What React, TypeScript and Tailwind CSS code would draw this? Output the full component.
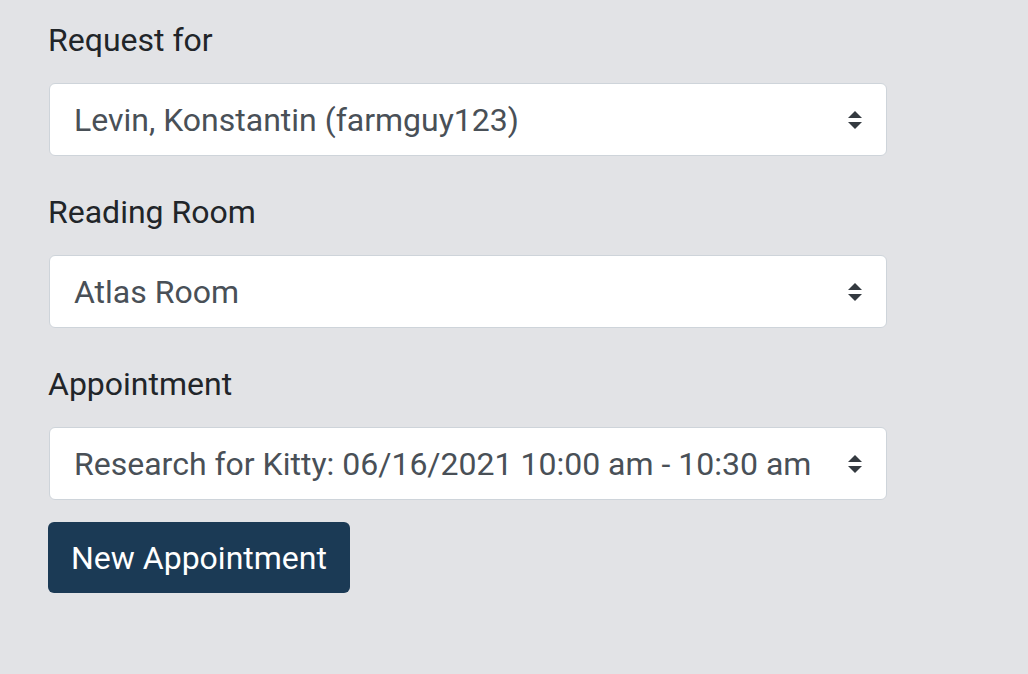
import { useState } from 'react';

function SortIcon({ className }: { className?: string }) {
  return (
    <svg className={className} viewBox="0 0 16 21" fill="currentColor">
      <path d="M8 1.5L15 8.5H1z" />
      <path d="M8 19.5L1 12.5h14z" />
    </svg>
  );
}

interface SelectFieldProps {
  label: string;
  value: string;
  options: string[];
  onChange: (v: string) => void;
  className?: string;
}

function SelectField({ label, value, options, onChange, className }: SelectFieldProps) {
  return (
    <div className={className}>
      <label className="block text-[32px] leading-[42px] text-[#212529] mb-[22px]">{label}</label>
      <div className="relative w-[838px] ml-px">
        <select
          value={value}
          onChange={(e) => onChange(e.target.value)}
          className="appearance-none w-full h-[73px] bg-white border-[1.5px] border-[#ced4da] rounded-[6px] pl-[24px] pr-[60px] text-[32px] text-[#495057] outline-none"
        >
          {options.map((o) => (
            <option key={o}>{o}</option>
          ))}
        </select>
        <SortIcon className="pointer-events-none absolute right-[24px] top-1/2 -translate-y-1/2 w-[16px] h-[21px] text-[#343a40]" />
      </div>
    </div>
  );
}

export default function App() {
  const [patron, setPatron] = useState('Levin, Konstantin (farmguy123)');
  const [room, setRoom] = useState('Atlas Room');
  const [appt, setAppt] = useState('Research for Kitty: 06/16/2021 10:00 am - 10:30 am');

  return (
    <div
      className="min-h-[674px] bg-[#e2e3e6] pl-[48px] pt-[19px]"
      style={{ fontFamily: 'Roboto, "Noto Sans", sans-serif' }}
    >
      <SelectField
        label="Request for"
        value={patron}
        options={['Levin, Konstantin (farmguy123)']}
        onChange={setPatron}
        className="mb-[35px]"
      />
      <SelectField
        label="Reading Room"
        value={room}
        options={['Atlas Room']}
        onChange={setRoom}
        className="mb-[35px]"
      />
      <SelectField
        label="Appointment"
        value={appt}
        options={['Research for Kitty: 06/16/2021 10:00 am - 10:30 am']}
        onChange={setAppt}
        className="mb-[22px]"
      />
      <button className="h-[71px] px-[23px] rounded-[6px] bg-[#1b3a55] text-white text-[32px]">
        New Appointment
      </button>
    </div>
  );
}
